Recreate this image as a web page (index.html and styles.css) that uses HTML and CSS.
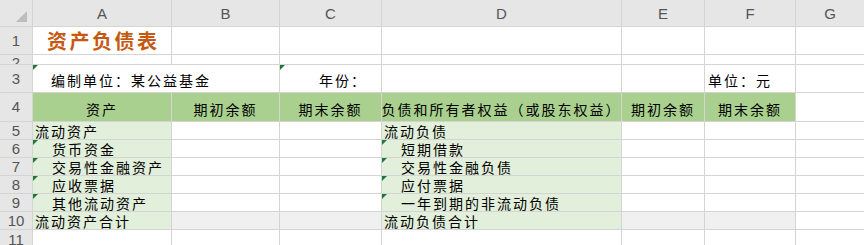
FILE: index.html
```html
<!DOCTYPE html>
<html lang="zh-CN">
<head>
<meta charset="utf-8">
<title>资产负债表</title>
<link rel="stylesheet" href="styles.css">
</head>
<body>
<div class="sheet">
  <div class="corner"><svg width="32" height="26" viewBox="0 0 32 26"><polygon points="27,11 27,22 16,22" fill="#bdbdbd"/></svg></div>
  <div class="ch">A</div><div class="ch">B</div><div class="ch">C</div><div class="ch">D</div><div class="ch">E</div><div class="ch">F</div><div class="ch">G</div>

  <div class="rh">1</div>
  <div class="c title">资产负债表</div><div class="c"></div><div class="c"></div><div class="c"></div><div class="c"></div><div class="c"></div><div class="c"></div>

  <div class="rh r2">2</div>
  <div class="c"></div><div class="c"></div><div class="c"></div><div class="c"></div><div class="c"></div><div class="c"></div><div class="c"></div>

  <div class="rh">3</div>
  <div class="c t3 span2 mark org">编制单位：某公益基金</div>
  <div class="c t3 right mark">年份：</div>
  <div class="c"></div><div class="c"></div>
  <div class="c t3 unit">单位：元</div>
  <div class="c"></div>

  <div class="rh">4</div>
  <div class="c hd">资产</div><div class="c hd">期初余额</div><div class="c hd">期末余额</div><div class="c hd">负债和所有者权益（或股东权益）</div><div class="c hd">期初余额</div><div class="c hd">期末余额</div><div class="c"></div>

  <div class="rh">5</div>
  <div class="c lg">流动资产</div><div class="c"></div><div class="c"></div><div class="c lg">流动负债</div><div class="c"></div><div class="c"></div><div class="c"></div>

  <div class="rh">6</div>
  <div class="c lg ind mark">货币资金</div><div class="c"></div><div class="c"></div><div class="c lg ind mark">短期借款</div><div class="c"></div><div class="c"></div><div class="c"></div>

  <div class="rh">7</div>
  <div class="c lg ind mark">交易性金融资产</div><div class="c"></div><div class="c"></div><div class="c lg ind mark">交易性金融负债</div><div class="c"></div><div class="c"></div><div class="c"></div>

  <div class="rh">8</div>
  <div class="c lg ind mark">应收票据</div><div class="c"></div><div class="c"></div><div class="c lg ind mark">应付票据</div><div class="c"></div><div class="c"></div><div class="c"></div>

  <div class="rh">9</div>
  <div class="c lg ind mark">其他流动资产</div><div class="c"></div><div class="c"></div><div class="c lg ind mark">一年到期的非流动负债</div><div class="c"></div><div class="c"></div><div class="c"></div>

  <div class="rh">10</div>
  <div class="c lg">流动资产合计</div><div class="c gr"></div><div class="c gr"></div><div class="c lg">流动负债合计</div><div class="c gr"></div><div class="c gr"></div><div class="c"></div>

  <div class="rh">11</div>
  <div class="c"></div><div class="c"></div><div class="c"></div><div class="c"></div><div class="c"></div><div class="c"></div><div class="c"></div>
</div>
</body>
</html>
```

FILE: styles.css
```css
html, body {
  margin: 0;
  padding: 0;
  background: #ffffff;
  overflow: hidden;
}

.sheet {
  display: grid;
  grid-template-columns: 32px 138px 107px 101px 239px 82px 90px 68px;
  grid-template-rows: 26px 27px 9px 27px 28px repeat(6, 17px) 20px;
  gap: 1px;
  background: #d4d4d4;
  width: 864px;
  font-family: "Noto Sans CJK SC", "Noto Sans", sans-serif;
  font-size: 14px;
  color: #000;
}

.corner {
  background: #e6e6e6;
}
.corner svg { display: block; }

.ch {
  background: #e6e6e6;
  color: #555;
  font-family: "Liberation Sans", Arial, sans-serif;
  font-size: 15px;
  display: flex;
  align-items: center;
  justify-content: center;
  padding-top: 1px;
}

.rh {
  background: #e6e6e6;
  color: #555;
  font-family: "Liberation Sans", Arial, sans-serif;
  font-size: 15px;
  line-height: 16px;
  display: flex;
  align-items: center;
  justify-content: center;
  overflow: hidden;
}
.rh.r2 {
  align-items: flex-start;
  line-height: 15px;
}

.c {
  background: #ffffff;
  position: relative;
  display: flex;
  align-items: flex-end;
  white-space: nowrap;
  letter-spacing: 2px;
  line-height: 14px;
  padding: 0 2px 1px 2px;
  min-width: 0;
}

.span2 { grid-column: span 2; }

.title {
  color: #c65911;
  font-weight: bold;
  font-size: 20px;
  letter-spacing: 2.5px;
  line-height: 22px;
  align-items: center;
  padding-left: 14px;
  padding-bottom: 0;
}

.t3 { padding-bottom: 5px; }
.org { padding-left: 18px; }
.right { justify-content: flex-end; padding-right: 14px; }
.unit { padding-left: 3px; }

.hd {
  background: #a9d08e;
  justify-content: center;
  padding: 0 0 5px 0;
  letter-spacing: 2px;
  overflow: visible;
}

.lg { background: #e2efda; }
.gr { background: #f0f0f0; }
.ind { padding-left: 19px; }

.mark::before {
  content: "";
  position: absolute;
  left: 0;
  top: 0;
  border-top: 5px solid #1f7a3a;
  border-right: 5px solid transparent;
}
```
